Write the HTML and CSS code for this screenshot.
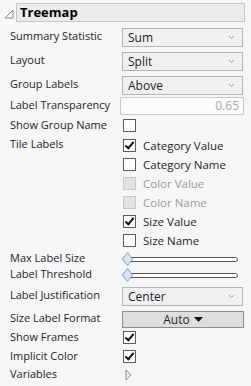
FILE: index.html
```html
<!DOCTYPE html>
<html lang="en">
<head>
  <meta charset="UTF-8">
  <title>Treemap</title>
  <link rel="stylesheet" href="styles.css">
</head>
<body>
  <div class="panel">
    <div class="title-row">
      <svg class="collapse" width="10" height="10" viewBox="0 0 10 10"><polygon points="1,9 9,1 9,9" fill="none" stroke="#888" stroke-width="1"/></svg>
      <div class="title">Treemap</div>
    </div>

    <div class="row r24">
      <span class="label">Summary Statistic</span>
      <div class="combo">Sum<svg class="chev" width="7" height="5" viewBox="0 0 7 5"><polyline points="1,1 3.5,3.5 6,1" fill="none" stroke="#999"/></svg></div>
    </div>
    <div class="row r24">
      <span class="label">Layout</span>
      <div class="combo">Split<svg class="chev" width="7" height="5" viewBox="0 0 7 5"><polyline points="1,1 3.5,3.5 6,1" fill="none" stroke="#999"/></svg></div>
    </div>
    <div class="row r24">
      <span class="label">Group Labels</span>
      <div class="combo">Above<svg class="chev" width="7" height="5" viewBox="0 0 7 5"><polyline points="1,1 3.5,3.5 6,1" fill="none" stroke="#999"/></svg></div>
    </div>
    <div class="row r19">
      <span class="label">Label Transparency</span>
      <div class="field">0.65</div>
    </div>
    <div class="row r21">
      <span class="label">Show Group Name</span>
      <span class="box"></span>
    </div>

    <div class="row top">
      <span class="label tl">Tile Labels</span>
      <div class="opts">
        <div class="opt"><span class="box on"></span>Category Value</div>
        <div class="opt"><span class="box"></span>Category Name</div>
        <div class="opt off"><span class="box"></span>Color Value</div>
        <div class="opt off"><span class="box"></span>Color Name</div>
        <div class="opt"><span class="box on"></span>Size Value</div>
        <div class="opt"><span class="box"></span>Size Name</div>
      </div>
    </div>

    <div class="row r16">
      <span class="label">Max Label Size</span>
      <div class="slider"><svg class="knob" width="11" height="14" viewBox="0 0 11 14"><polygon points="5.5,0.5 10.5,7 5.5,13.5 0.5,7" fill="#d8e6f4" stroke="#7d9cc0"/></svg></div>
    </div>
    <div class="row r16">
      <span class="label">Label Threshold</span>
      <div class="slider"><svg class="knob" width="11" height="14" viewBox="0 0 11 14"><polygon points="5.5,0.5 10.5,7 5.5,13.5 0.5,7" fill="#d8e6f4" stroke="#7d9cc0"/></svg></div>
    </div>
    <div class="row r27">
      <span class="label">Label Justification</span>
      <div class="combo">Center<svg class="chev" width="7" height="5" viewBox="0 0 7 5"><polyline points="1,1 3.5,3.5 6,1" fill="none" stroke="#999"/></svg></div>
    </div>
    <div class="row r19">
      <span class="label">Size Label Format</span>
      <div class="btn">Auto <svg width="9" height="5" viewBox="0 0 9 5"><polygon points="0,0 9,0 4.5,5" fill="#111"/></svg></div>
    </div>
    <div class="row r19">
      <span class="label">Show Frames</span>
      <span class="box on"></span>
    </div>
    <div class="row r19">
      <span class="label">Implicit Color</span>
      <span class="box on"></span>
    </div>
    <div class="row r16">
      <span class="label">Variables</span>
      <svg class="expand" width="7" height="12" viewBox="0 0 7 12"><polygon points="1,1 6,6 1,11" fill="none" stroke="#8a8a8a"/></svg>
    </div>
  </div>
</body>
</html>
```

FILE: styles.css
```css
body {
  margin: 0;
  background: #f6f6f6;
  font-family: "Open Sans", sans-serif;
  font-size: 11px;
  color: #1e1e2a;
}
.panel {
  padding: 3px 6px 0 10px;
}
.title-row {
  display: flex;
  align-items: center;
  margin-left: -6px;
  height: 18px;
}
.collapse {
  margin: 4px 2px 0 0;
}
.title {
  flex: 1;
  height: 17px;
  background: #ebebeb;
  border: 1px solid #c6c6c6;
  font-size: 13px;
  font-weight: bold;
  color: #000;
  line-height: 16px;
  padding-left: 3px;
}
.row {
  display: flex;
  align-items: center;
}
.r24 { height: 24px; }
.r27 { height: 27px; }
.r21 { height: 21px; }
.r19 { height: 19px; }
.r16 { height: 16px; }
.title-row + .row { margin-top: 3px; }
.label {
  width: 112px;
  flex: none;
  margin-top: -2px;
}
.combo {
  width: 121px;
  height: 19px;
  box-sizing: border-box;
  border: 1px solid #b4b4b4;
  background: #f0f0f0;
  padding: 0 7px 0 5px;
  display: flex;
  align-items: center;
  justify-content: space-between;
  font-size: 12px;
  margin-top: 2px;
}
.field {
  width: 124px;
  height: 18px;
  box-sizing: border-box;
  margin-left: -2px;
  border: 1px solid #c8c8c8;
  background: #fbfbfb;
  color: #a8a8a8;
  text-align: right;
  padding-right: 4px;
  line-height: 16px;
  font-size: 12px;
}
.box {
  width: 13px;
  height: 13px;
  box-sizing: border-box;
  border: 1px solid #5a5a5a;
  background: #fff;
  flex: none;
  margin-left: 1px;
  position: relative;
}
.box.on::after {
  content: "";
  position: absolute;
  left: 3px;
  top: 0;
  width: 3px;
  height: 7px;
  border: solid #111;
  border-width: 0 2px 2px 0;
  transform: rotate(40deg);
}
.top {
  align-items: flex-start;
}
.tl {
  margin-top: 0;
}
.opts {
  display: flex;
  flex-direction: column;
}
.opt {
  height: 19px;
  display: flex;
  align-items: center;
  font-size: 11.5px;
}
.opt .box {
  margin-right: 7px;
}
.opt.off {
  color: #9a9a9a;
}
.opt.off .box {
  background: #e2e2e2;
  border-color: #cacaca;
}
.slider {
  position: relative;
  width: 110px;
  height: 5px;
  margin-left: 6px;
  box-sizing: border-box;
  border: 1px solid #555;
  border-radius: 3px;
  background: #fff;
  margin-top: 2px;
}
.knob {
  position: absolute;
  left: -7px;
  top: -6px;
}
.btn {
  width: 122px;
  height: 17px;
  box-sizing: border-box;
  border: 1px solid #8c8c8c;
  background: #dedede;
  display: flex;
  align-items: center;
  justify-content: center;
  gap: 4px;
  font-size: 12px;
  margin-top: 1px;
}
.expand {
  margin-left: 3px;
  margin-top: 2px;
}
```
